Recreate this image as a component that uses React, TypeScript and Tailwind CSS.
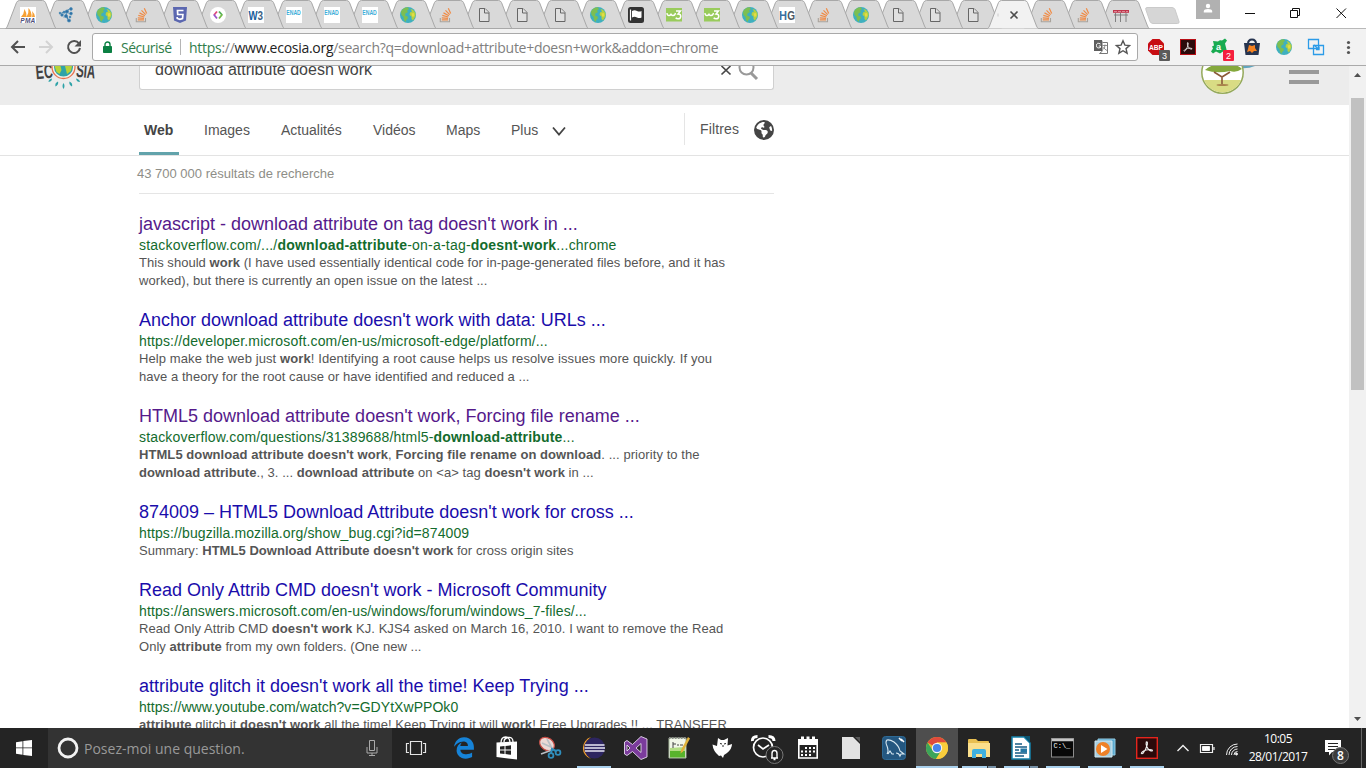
import React from "react";
import { FaEarthAmericas, FaEdgeLegacy } from "react-icons/fa6";

type IconProps = { s?: number };

const Earth = ({ s = 16 }: IconProps) => (
  <svg width={s} height={s} viewBox="0 0 16 16">
    <circle cx="8" cy="8" r="8" fill="#3fb0bf" />
    <path d="M1 4.500Q4 0 8 .4L9 2 7 3.500 8 5 5.500 6.500 5 8.500 7.500 9.500 8 11 6 13.500 5.500 15 4 13 3.500 10 1.500 8Z" fill="#7cbf52" />
    <path d="M10.500 2Q13 2 14.500 4.500L15.800 7 15 10 13 13.500 11.500 12 11.500 9.500 9.500 8 10 5.500 12 4.500Z" fill="#b5d043" />
    <path d="M11.500 6.500 14 6 14.500 9 12.500 10Z" fill="#e4dc43" />
  </svg>
);

const Stack = () => (
  <svg width="16" height="16" viewBox="0 0 16 16" fill="none">
    <path d="M2.300 11v3.700h9.200V11" stroke="#a9a39c" strokeWidth="1.100" />
    <path d="M3.800 12.800h6.200M3.800 10.800l6.200 .5M4.300 8.400l6 1.600M5.500 5.900l5.400 2.900M7.500 3.300l4.200 4.300M10.300 1.300l2.400 5.200" stroke="#f08b45" strokeWidth="1.200" />
  </svg>
);

const Doc = () => (
  <svg width="16" height="16" viewBox="0 0 16 16" fill="#e0e0e0" stroke="#666" strokeWidth="1">
    <path d="M3.500 1.500h5.500l4 4v9H3.500z" />
    <path d="M8.500 1.500v4.500h4.500" />
  </svg>
);

const Pma = () => (
  <svg width="16" height="16" viewBox="0 0 16 16">
    <rect width="16" height="16" fill="#fff" />
    <path d="M1 10Q4 7 4.500 2Q7 6 6.500 10ZM6.500 10Q9 6 8.500 1Q12 5 11.500 10ZM12 10Q13 7 12 4Q15 7 15 10Z" fill="#f6a034" />
    <text x="0.300" y="15.700" fontSize="6.500" fontWeight="bold" fontStyle="italic" fill="#51517c" fontFamily="Liberation Sans, sans-serif" textLength="15">PMA</text>
  </svg>
);

const Dots = () => (
  <svg width="16" height="16" viewBox="0 0 16 16" stroke="#4c8eb9" strokeWidth=".6" fill="#2d6fa4">
    <path d="M1 7l7-2 5-4M3 9l5-4M8 5l6 3M8 5v5l3 4M8 10H5" />
    <circle cx="13" cy="2" r="1.400" /><circle cx="9" cy="4.500" r="1.600" /><circle cx="2" cy="6" r=".9" />
    <circle cx="4" cy="8" r="1.300" /><circle cx="13" cy="6.500" r="1.400" /><circle cx="8" cy="9" r="1.600" />
    <circle cx="11" cy="13.500" r="1.600" /><circle cx="12" cy="10" r="1" /><circle cx="6" cy="5" r="1" />
  </svg>
);

const Shield5 = () => (
  <svg width="16" height="16" viewBox="0 0 16 16">
    <path d="M1 0h14l-1 13.500L8 16l-6-2.500z" fill="#5b67b0" />
    <path d="M11.500 3.500h-6l.2 4h5.200l-.4 4-2.600.9-2.600-.9-.1-1.500" fill="none" stroke="#fff" strokeWidth="1.700" />
  </svg>
);

const CodeRound = () => (
  <svg width="16" height="16" viewBox="0 0 16 16">
    <circle cx="8" cy="8" r="8" fill="#fff" />
    <path d="M7 4.500 4 8" stroke="#e0497a" strokeWidth="1.800" fill="none" />
    <path d="M3.800 7.500 7 11.500" stroke="#9a56c9" strokeWidth="1.800" fill="none" />
    <path d="M9 4.500 12.200 8" stroke="#4fae57" strokeWidth="1.800" fill="none" />
    <path d="M12.200 7.500 9 11.500" stroke="#72b944" strokeWidth="1.800" fill="none" />
  </svg>
);

const LetterIcon = ({ bg, parts, size, y }: { bg: string; parts: [string, string, number, number][]; size: number; y: number }) => (
  <svg className="overflow-visible" width="16" height="16" viewBox="0 0 16 16">
    <rect width="16" height="16" fill={bg} />
    {parts.map(([t, c, x, w]) => (
      <text key={t} x={x} y={y} fontSize={size} fontWeight="bold" fill={c} fontFamily="Liberation Sans, sans-serif" textLength={w} lengthAdjust="spacingAndGlyphs">{t}</text>
    ))}
  </svg>
);

const W3 = () => <LetterIcon bg="#fff" size={12} y={12.500} parts={[["W", "#17609c", 0.5, 9], ["3", "#3b6286", 9.500, 5.500]]} />;
const Enad = () => <LetterIcon bg="#fff" size={8} y={8} parts={[["ENAD", "#3cadd8", 0.3, 14.500]]} />;
const Hg = () => <LetterIcon bg="#fff" size={13} y={13} parts={[["H", "#396fa3", 0, 8], ["G", "#4c5663", 8.200, 7.800]]} />;

const Flag = () => (
  <svg width="16" height="16" viewBox="0 0 16 16">
    <rect width="16" height="16" rx="2.500" fill="#333" />
    <path d="M2.500 2.500v11" stroke="#fff" strokeWidth="1.200" />
    <path d="M4 4q2.500-1.500 5 0 2.500 1 4.500 0v6.500q-2 1-4.500 0-2.500-1.300-5 0z" fill="#fff" />
  </svg>
);

const Green3 = () => (
  <svg width="16" height="16" viewBox="0 0 16 16" fill="none" stroke="#fff">
    <rect width="16" height="13.500" y="1" fill="#99cb5c" stroke="none" />
    <path d="M1 6q0 2.500 2 2.500t2-2q0 2 2 2t2.500-2.500" strokeWidth="1.300" />
    <path d="M10 4h4.500l-2.500 3q3 0 2.700 2.600-.3 2.200-2.700 2.200-1.500 0-2.300-1.100" strokeWidth="1.500" />
  </svg>
);

const Bench = () => (
  <svg width="16" height="16" viewBox="0 0 16 16">
    <path d="M0 3h16v2.800H0z" fill="#c0354c" />
    <path d="M1 4.500h14" stroke="#e7aab4" strokeWidth=".7" strokeDasharray="3 1" />
    <path d="M2.500 6v9M7.500 6v9M13 6v9M1 8h14" stroke="#777" strokeWidth=".9" />
  </svg>
);

type Tab = { icon: () => React.ReactNode; w: number; active?: boolean };

const order = [Pma, Dots, Earth, Stack, Shield5, CodeRound, W3, Enad, Enad, Enad, Earth, Stack, Doc, Doc, Doc, Earth, Flag, Green3, Green3, Earth, Hg, Stack, Earth, Doc, Doc, Doc];
const tabs: Tab[] = [
  ...order.map((icon, i) => ({ icon: icon as () => React.ReactNode, w: i < 19 ? 38 : 37.1 })),
  { icon: () => null, w: 37.1, active: true },
  { icon: Stack, w: 37.1 },
  { icon: Stack, w: 37.1 },
  { icon: Bench, w: 37.1 },
];

const TabStrip = () => (
  <div className="flex h-[28px] bg-white">
    <div className="isolate flex pl-[6px]">
      {tabs.map((t, i) => (
        <div key={i} className="grid h-[29px] shrink-0" style={{ width: t.w, zIndex: t.active ? 99 : 50 - i }}>
          <svg className="overflow-visible [grid-area:1/1]" width="50" height="29" viewBox="0 0 50 29">
            <path
              d="M-.5 28.500Q.8 28 1.500 26L10.500 2.500Q11.500 .5 13.500 .5H36.500Q38.500 .5 39.500 2.500L48.500 26Q49.200 28 50.500 28.500Z"
              fill={t.active ? "#f2f2f2" : "#d9d9d9"}
            />
            <path
              d={"M-.5 28.500Q.8 28 1.500 26L10.500 2.500Q11.500 .5 13.500 .5H36.500Q38.500 .5 39.500 2.500L48.500 26Q49.200 28 50.500 28.500" + (t.active ? "" : "Z")}
              fill="none"
              stroke="#a8a8a8"
            />
          </svg>
          <div className="mt-[7px] ml-[14px] [grid-area:1/1]">
            {t.active ? (
              <svg className="overflow-visible" width="16" height="16" viewBox="0 0 16 16">
                <path d="M-4 6.500v3" stroke="#ccc" />
                <path d="M8.500 4.500l7 7M15.500 4.500l-7 7" stroke="#4d4d4d" strokeWidth="1.600" />
              </svg>
            ) : (
              <t.icon />
            )}
          </div>
        </div>
      ))}
    </div>
    <svg className="mt-[5px] ml-[9px]" width="35" height="20" viewBox="0 0 35 20">
      <path d="M2 2.500h25q2 0 3 2l4 12q.5 2-1.500 2H8q-2 0-3-2L.8 4.500Q.2 2.500 2 2.500z" fill="#d6d6d6" stroke="#cacaca" />
    </svg>
    <div className="ml-auto flex">
      <div className="flex h-[19px] w-[24px] justify-center bg-[#b1b1b1]">
        <svg width="10" height="16" viewBox="0 0 10 16" fill="#fff">
          <circle cx="5" cy="6" r="2.200" />
          <path d="M.8 12.500V11Q1 9 5 9t4.200 2v1.500z" />
        </svg>
      </div>
      <svg width="146" height="28" viewBox="0 0 146 28" fill="none" stroke="#111" strokeWidth="1">
        <path d="M25 13.500h10M70.500 10.500h7v7h-7zM72.500 10.500v-2h7v7h-2M116.500 8.500l9.500 9.500M126 8.500l-9.500 9.500" />
      </svg>
    </div>
  </div>
);

const AdobeMark = ({ s = 16, c = "#fff" }: { s?: number; c?: string }) => (
  <svg width={s} height={s} viewBox="0 0 22 22">
    <rect x=".7" y=".7" width="20.600" height="20.600" fill="#2b0a0b" stroke={c} strokeWidth="1.400" />
    <path d="M10.300 5q1.500-.6 1 2.500-1.300 5-4 8.500-1.500 1.300-2 .3.300-1.700 4.800-3.300 4.700-1 6.300.1.300 1.200-1.400.9-2.600-.7-4.300-4.500-1-3-.4-4.500z" fill="none" stroke="#eee" strokeWidth="1.100" />
  </svg>
);

const Toolbar = () => (
  <div className="flex h-[38px] items-start border-b border-[#aaa] bg-[#f2f2f2] shadow-[inset_0_1px_0_#b9b9b9]">
    <svg className="shrink-0" width="92" height="37" viewBox="0 0 92 37" fill="none" strokeWidth="2">
      <path d="M25 19H12M18 13l-6 6 6 6" stroke="#515151" />
      <path d="M39 19h13M46 13l6 6-6 6" stroke="#d3d3d3" />
      <path d="M79 15.500A6 6 0 1 0 80 20" stroke="#515151" />
      <path d="M81 12v6.500h-6.500z" fill="#515151" />
    </svg>
    <div className="mt-[5px] flex h-[28px] w-[1046px] items-center rounded-[3px] border border-[#a9a9a9] bg-white font-['Open_Sans',sans-serif] text-[14px]">
      <svg className="ml-[10px] shrink-0" width="9" height="13" viewBox="0 0 9 13">
        <path d="M2 6V3.500a2.500 2.500 0 0 1 5 0V6" fill="none" stroke="#0b8043" strokeWidth="1.400" />
        <rect y="5" width="9" height="7" rx=".8" fill="#0b8043" />
      </svg>
      <span className="ml-[9px] w-[59px] shrink-0 tracking-[-0.5px] whitespace-nowrap text-[#2f7d4b]">Sécurisé</span>
      <div className="h-[16px] w-px shrink-0 bg-[#b5b5b5]" />
      <span className="ml-[8px] tracking-[-0.28px] whitespace-nowrap text-[#808080]">
        <span className="text-[#2f7d4b]">https</span>://<span className="text-[#222]">www.ecosia.org</span>/search?q=download+attribute+doesn+work&amp;addon=chrome
      </span>
      <svg className="mr-[6px] ml-auto shrink-0" width="38" height="16" viewBox="0 0 38 16">
        <path d="M1 1h8l3 11H1z" fill="#5e5e5e" />
        <path d="M9.500 3.500h5v11H6.500l3-2.500" fill="#fff" stroke="#777" />
        <path d="M9.500 6.500h5M12 5.500q0 4-2 5M10.500 8q1 2.500 3.500 3.500" stroke="#777" fill="none" strokeWidth=".8" />
        <path d="M7.500 5Q3.500 3 3.500 6.500t4 2V7H5.700" stroke="#fff" fill="none" />
        <path d="M30 1.800l1.900 4.300 4.700.4-3.600 3.100 1.100 4.600-4.100-2.500-4.100 2.500 1.100-4.600-3.600-3.100 4.700-.4z" fill="none" stroke="#555" strokeWidth="1.400" />
      </svg>
    </div>
    <svg className="shrink-0" width="228" height="37" viewBox="0 0 228 37">
      <g fontFamily="Liberation Sans, sans-serif" fontWeight="bold">
        <path d="M14.500 11h7l4.500 4.500v7L21.500 27h-7L10 22.500v-7z" fill="#c70d12" />
        <text x="11" y="22" fontSize="8" fill="#fff" textLength="14" lengthAdjust="spacingAndGlyphs">ABP</text>
        <rect x="21" y="22" width="11" height="11" rx="1" fill="#5a5a5a" />
        <text x="24" y="31" fontSize="9" fill="#fff" fontWeight="normal">3</text>
        <path d="M75 13l5 0.500q2-2 4-1l3-2 2 2-2 3 1 4 1 4-4 0-3 2-4-2-3 2-2-2 2-3-1-2 2-1z" fill="#18ab50" />
        <text x="78" y="22" fontSize="9" fill="#fff">a</text>
        <rect x="85" y="22" width="11" height="11" rx="1" fill="#f5203e" />
        <text x="88" y="31" fontSize="9" fill="#fff" fontWeight="normal">2</text>
      </g>
      <path d="M110 16q0-4.500 4-4.500t4 4.500" fill="none" stroke="#26344f" strokeWidth="2" />
      <path d="M106 15h16l-1.500 12h-13z" fill="#26344f" />
      <path d="M111 17l3 1 3-1 0 3 2 3-3 0-2 2-2-2-3 1 1-3z" fill="#f58220" />
      <path d="M170.500 11.500h10v9h-10zM175.500 17.500h10v9h-10z" fill="none" stroke="#2b9be8" strokeWidth="1.300" />
      <path d="M176 17l5 4.500M181 18.500v3h-3" stroke="#2b9be8" strokeWidth="1.300" fill="none" />
      <g fill="#555"><circle cx="210.500" cy="14.500" r="1.600" /><circle cx="210.500" cy="19.500" r="1.600" /><circle cx="210.500" cy="24.500" r="1.600" /></g>
      <g transform="translate(42 11)">
        <AdobeMark s={16} c="#b80f16" />
      </g>
      <g transform="translate(138 11)"><Earth /></g>
    </svg>
  </div>
);

const SiteHeader = () => (
  <div className="flex h-[39px] bg-[#ececec]">
    <svg className="ml-[33px] shrink-0" width="66" height="26" viewBox="33 66 66 26">
      <g fontFamily="Liberation Sans, sans-serif" fontWeight="bold" fontSize="20" fill="#414141">
        <text x="36" y="78.500" textLength="17" lengthAdjust="spacingAndGlyphs" transform="rotate(-5 44 75)">EC</text>
        <text x="76" y="77.500" textLength="19" lengthAdjust="spacingAndGlyphs" transform="rotate(5 84 74)">SIA</text>
      </g>
      <circle cx="63.500" cy="67" r="11.500" fill="#f4f1e8" stroke="#e8724e" strokeWidth="1.300" />
      <circle cx="63.500" cy="67" r="9.500" fill="#2fa3a8" />
      <path d="M54.500 66h6l1 4-2 4-3-2zM65 66h7l-1 5-4 3-1-4z" fill="#b8d238" />
      <g fill="#2fa3a8">
        <path d="M52 78.500q0 3-3.500 3.500 0-3 3.500-3.500zM58 81.500q1 3-2.500 5-1-3.500 2.500-5zM63.500 83q2 3 0 6-2-3 0-6zM69.500 81.500q3.500 1.500 2.500 5-3.500-2-2.500-5zM76 78.500q3.500.5 4 3.500-3.500 0-4-3.500z" />
      </g>
    </svg>
    <div className="ml-[40px] flex h-[24px] w-[635px] shrink-0 rounded-b-[3px] border border-t-0 border-[#d0d0d0] bg-white">
      <span className="-mt-[8px] ml-[15px] text-[16px] leading-[24px] whitespace-nowrap text-[#444]">download attribute doesn work</span>
      <svg className="mr-[-1px] ml-auto shrink-0" width="56" height="16" viewBox="0 0 56 16" fill="none">
        <path d="M3.500 0l9 8.500M12.500 0l-9 8.500" stroke="#484848" strokeWidth="1.700" />
        <circle cx="28.500" cy="1.500" r="7" stroke="#999" strokeWidth="2" />
        <path d="M33 7l6 6" stroke="#999" strokeWidth="3" />
      </svg>
    </div>
    <svg className="ml-[424px] shrink-0" width="124" height="30" viewBox="1198 66 124 30">
      <path d="M1226 66h29q-7 3-16 2z" fill="#61a5bd" />
      <circle cx="1222.500" cy="72.500" r="20.700" fill="#fff" stroke="#94a95b" strokeWidth="1.500" />
      <path d="M1204 80h37a20 20 0 0 1-37 0z" fill="#d9dc84" />
      <path d="M1205 70q6-6 16-5 14-3 21 4-6 4-12 2-13 3-25-1z" fill="#84a83c" />
      <path d="M1214 72l8 5 8-5M1222 76v8" stroke="#8b5a3a" strokeWidth="1.600" fill="none" />
      <ellipse cx="1222.500" cy="85" rx="6" ry="1" fill="#a8824b" />
      <path d="M1289 70h30v4h-30zM1289 80h30v4h-30z" fill="#999" />
    </svg>
  </div>
);

const Nav = () => (
  <div className="flex h-[51px] border-b border-[#e3e3e3] pl-[139px] text-[14px] text-[#555]">
    <div className="h-[50px] w-[40px] border-b-3 border-[#62a3ab] pl-[5px] leading-[50px] font-bold text-[#444]">Web</div>
    <span className="ml-[25px] w-[77px] leading-[50px]">Images</span>
    <span className="w-[92px] leading-[50px]">Actualités</span>
    <span className="w-[73px] leading-[50px]">Vidéos</span>
    <span className="w-[65px] leading-[50px]">Maps</span>
    <span className="w-[41px] leading-[50px]">Plus</span>
    <svg className="mt-[21px]" width="14" height="11" viewBox="0 0 14 11" fill="none" stroke="#444" strokeWidth="1.800"><path d="M1 1.500l6 7L13 1.500" /></svg>
    <div className="mt-[8px] ml-[118px] flex h-[32px] w-[90px] border-l border-[#e5e5e5] pl-[15px]">
      <span className="w-[54px] leading-[32px] tracking-[0.15px]">Filtres</span>
      <FaEarthAmericas className="mt-[7px] shrink-0 text-[#454545]" size={20} />
    </div>
  </div>
);

type Result = { title: string; visited?: boolean; url: React.ReactNode; urlTracking: number; lines: [React.ReactNode, number][] };

const results: Result[] = [
  {
    title: "javascript - download attribute on tag doesn't work in ...",
    visited: true,
    url: <>stackoverflow.com/.../<b>download-attribute</b>-on-a-tag-<b>doesnt-work</b>...chrome</>,
    urlTracking: 0.21,
    lines: [
      [<>This should <b>work</b> (I have used essentially identical code for in-page-generated files before, and it has</>, 0.035],
      [<>worked), but there is currently an open issue on the latest ...</>, 0.06],
    ],
  },
  {
    title: "Anchor download attribute doesn't work with data: URLs ...",
    url: "https://developer.microsoft.com/en-us/microsoft-edge/platform/...",
    urlTracking: 0.15,
    lines: [
      [<>Help make the web just <b>work</b>! Identifying a root cause helps us resolve issues more quickly. If you</>, 0.1],
      [<>have a theory for the root cause or have identified and reduced a ...</>, 0.045],
    ],
  },
  {
    title: "HTML5 download attribute doesn't work, Forcing file rename ...",
    visited: true,
    url: <>stackoverflow.com/questions/31389688/html5-<b>download-attribute</b>...</>,
    urlTracking: 0.17,
    lines: [
      [<><b>HTML5 download attribute doesn't work</b>, <b>Forcing file rename on download</b>. ... priority to the</>, 0.07],
      [<><b>download attribute</b>., 3. ... <b>download attribute</b> on &lt;a&gt; tag <b>doesn't work</b> in ...</>, 0.065],
    ],
  },
  {
    title: "874009 – HTML5 Download Attribute doesn't work for cross ...",
    url: "https://bugzilla.mozilla.org/show_bug.cgi?id=874009",
    urlTracking: 0.12,
    lines: [[<>Summary: <b>HTML5 Download Attribute doesn't work</b> for cross origin sites</>, 0.04]],
  },
  {
    title: "Read Only Attrib CMD doesn't work - Microsoft Community",
    url: "https://answers.microsoft.com/en-us/windows/forum/windows_7-files/...",
    urlTracking: 0.12,
    lines: [
      [<>Read Only Attrib CMD <b>doesn't work</b> KJ. KJS4 asked on March 16, 2010. I want to remove the Read</>, 0.065],
      [<>Only <b>attribute</b> from my own folders. (One new ...</>, 0.03],
    ],
  },
  {
    title: "attribute glitch it doesn't work all the time! Keep Trying ...",
    url: "https://www.youtube.com/watch?v=GDYtXwPPOk0",
    urlTracking: 0.05,
    lines: [[<><b>attribute</b> glitch it <b>doesn't work</b> all the time! Keep Trying it will <b>work</b>! Free Upgrades !! ... TRANSFER</>, 0.07]],
  },
];

const Results = () => (
  <div className="ml-[139px] w-[635px] whitespace-nowrap">
    <div className="-ml-[2px] h-[37px] text-[13px] leading-[35px] text-[#8e8e87]">43 700 000 résultats de recherche</div>
    <div className="mb-[18px] h-px bg-[#e5e5e5]" />
    {results.map((r) => (
      <div key={r.title} className="mb-[18px]">
        <div className={r.visited ? "h-[24px] text-[18px] leading-[24px] text-[#551a8b]" : "h-[24px] text-[18px] leading-[24px] text-[#1a0dab]"}>{r.title}</div>
        <div className="h-[18px] text-[14px] leading-[18px] text-[#136b2d]" style={{ letterSpacing: r.urlTracking }}>{r.url}</div>
        {r.lines.map(([l, tracking], i) => (
          <div key={i} className="h-[18px] text-[13px] leading-[18px] text-[#555]" style={{ letterSpacing: tracking }}>{l}</div>
        ))}
      </div>
    ))}
  </div>
);

const Scrollbar = () => (
  <div className="flex w-[17px] shrink-0 flex-col items-center bg-[#f1f1f1]">
    <svg width="17" height="32" viewBox="0 0 17 32"><path d="M5 11l3.500-4 3.500 4z" fill="#505050" /></svg>
    <div className="h-[292px] w-[13px] bg-[#c1c1c1]" />
    <svg className="mt-auto" width="17" height="17" viewBox="0 0 17 17"><path d="M5 6l3.500 4L12 6z" fill="#505050" /></svg>
  </div>
);

const EdgeIcon = () => <FaEdgeLegacy size={22} color="#1683d8" />;
const StoreIcon = () => (
  <svg width="24" height="26" viewBox="0 0 24 26">
    <path d="M6 8Q6 2 10.500 2T15 8M9 7q0-4 4.500-4.500T18 7" fill="none" stroke="#fff" strokeWidth="1.300" />
    <path d="M1.500 7.500L22 6.500v18L1.500 22z" fill="#fff" />
    <path d="M5 11.500l4.500-.5v3.500H5zM10.500 10.900l5.500-.6v4.200h-5.500zM5 15.500h4.500V19L5 18.500zM10.500 15.500H16v4.300l-5.500-.7z" fill="#242424" />
  </svg>
);
const SnipIcon = () => (
  <svg width="24" height="24" viewBox="0 0 24 24">
    <ellipse cx="9" cy="8" rx="8" ry="6" transform="rotate(35 9 8)" fill="#ecd9d6" stroke="#c94b43" strokeWidth="1.200" />
    <path d="M4 7l11 5M9 3l6 11M3 18l11-4" stroke="#b9bfc5" strokeWidth="1.600" />
    <circle cx="13" cy="19.500" r="2.400" fill="none" stroke="#2f8ebc" strokeWidth="1.800" />
    <circle cx="20" cy="16.500" r="2.400" fill="none" stroke="#2f8ebc" strokeWidth="1.800" />
    <path d="M13 17l1-4 4 2" stroke="#2f8ebc" strokeWidth="2" fill="none" />
  </svg>
);
const EclipseIcon = () => (
  <svg width="24" height="24" viewBox="0 0 24 24">
    <path d="M10 1A11.500 11.500 0 0 0 10 23 13.500 13.500 0 0 1 10 1z" fill="#f4a02c" />
    <circle cx="13.500" cy="12" r="10.500" fill="#2d2560" />
    <path d="M4 9h19.500M3.500 12h20.500M4 15h19.500" stroke="#e9e7f3" strokeWidth="1.400" />
  </svg>
);
const VsIcon = () => (
  <svg width="24" height="24" viewBox="0 0 24 24" fillRule="evenodd">
    <path d="M17 .5l6 2.500v18L17 23.500 8.500 15.500 3 19.500.5 18V6L3 4.500l5.500 4zM17 7.500L12 12l5 4.500zM3 9v6l3-3z" fill="#7b3c9c" stroke="#e6dbee" strokeWidth=".9" />
  </svg>
);
const NotepadIcon = () => (
  <svg width="24" height="24" viewBox="0 0 24 24">
    <path d="M2 2h17v20H2z" fill="#f1f6e9" stroke="#a6b79b" />
    <path d="M3 15h15v6.500H3z" fill="#58b32c" /><path d="M3 12l15-1v4H3z" fill="#b2dd84" />
    <path d="M6 6v6M6 8h3M10 9h2M13 9h3" stroke="#444" /><path d="M21 1l2 1.500-7 13-2.500 2 .5-3.500z" fill="#e0b23c" />
    <path d="M2 2h17" stroke="#888" strokeWidth="2" strokeDasharray="1.500 1.500" />
  </svg>
);
const CatIcon = () => (
  <svg width="22" height="22" viewBox="0 0 22 22">
    <path d="M7 1l3 2h3l4-2-.5 7.500L21 7q0 5-5 9l-3 2-1 3-2-2.500-2 .5Q2 14 1.500 7.500L6 9z" fill="#fff" />
    <path d="M9 6.500l2 .5M15 6.500l-2 .5M11 9h2" stroke="#242424" />
  </svg>
);
const AlarmIcon = () => (
  <svg width="34" height="30" viewBox="0 0 34 30" fill="none" className="overflow-visible">
    <circle cx="15" cy="14.500" r="9.500" stroke="#fff" strokeWidth="1.700" />
    <path d="M4.500 8Q4 3.500 9.500 3.500M20.500 3.500q5.500 0 5.500 4.500" stroke="#fff" strokeWidth="3" />
    <path d="M10 12l5 4 6-4" stroke="#fff" strokeWidth="1.700" />
    <circle cx="26.500" cy="22" r="8.500" fill="#242424" stroke="#777" />
    <path d="M23 25h7M24 24.500v-4q0-3 2.500-3t2.500 3v4M25.500 26.500h2" stroke="#fff" strokeWidth="1.400" />
  </svg>
);
const CalendarIcon = () => (
  <svg width="22" height="24" viewBox="0 0 22 24">
    <path d="M1.800 4h18.400v18H1.800z" fill="none" stroke="#fff" strokeWidth="1.600" />
    <path d="M1 3h20v6H1zM4 .5h3v3H4zM9.500 .5h3v3h-3zM15 .5h3v3h-3z" fill="#fff" />
    <path d="M8 12h11M4 15.500h15M4 19h11" stroke="#fff" strokeWidth="2" strokeDasharray="2 2" />
  </svg>
);
const PageIcon = () => (
  <svg width="22" height="24" viewBox="0 0 22 24"><path d="M2 1h11l7 7v15H2z" fill="#e2e2e2" /><path d="M15 1h5v5z" fill="#595959" /></svg>
);
const MysqlIcon = () => (
  <svg width="24" height="24" viewBox="0 0 24 24">
    <rect x=".5" y=".5" width="23" height="23" rx="3" fill="#245780" stroke="#2e6a95" />
    <path d="M5 18q2-3 0-8-2-4 0-6 3-.5 7 2 5 4 6 9l4 3-3 0-1 2q-1-3-4-3M6 18l2-3 2 3 2 0" fill="none" stroke="#d8e8f0" strokeWidth="1.100" />
    <path d="M17 2l3 3M22 6l-3-3" stroke="#fff" strokeWidth="1.600" />
  </svg>
);
const ChromeIcon = () => (
  <svg width="22" height="22" viewBox="0 0 22 22">
    <circle cx="11" cy="11" r="11" fill="#e8b92e" />
    <path d="M11 11L1.500 5.500A11 11 0 0 1 20.500 5.500H11z" fill="#df4a3c" />
    <path d="M1.500 5.500A11 11 0 0 0 10 22l5.300-8.500L11 11 6.700 13.500z" fill="#3ba55b" />
    <path d="M20.500 5.500H11v5l4.500 3L10 22A11 11 0 0 0 20.500 5.500z" fill="#f9cd3c" />
    <circle cx="11" cy="11" r="5.200" fill="#f5f5f5" /><circle cx="11" cy="11" r="4.100" fill="#4784ea" />
  </svg>
);
const FolderIcon = () => (
  <svg width="24" height="22" viewBox="0 0 24 22">
    <path d="M1 3q0-1 1-1h7l2 2h10q1 0 1 1v13H1z" fill="#e9bf51" /><path d="M1 6h22v14H1z" fill="#fbdf8c" />
    <path d="M5 21v-7q0-2 2-2h10q2 0 2 2v7h-4v-4H9v4z" fill="#3fb0df" />
  </svg>
);
const WriterIcon = () => (
  <svg width="22" height="24" viewBox="0 0 22 24">
    <path d="M2 1h12l6 6v16H2z" fill="#fff" stroke="#1584ad" strokeWidth="1.500" /><path d="M14 0h6v7z" fill="#0b5470" />
    <path d="M5 8h7M5 11h12M5 14h4M5 17h12M5 20h9" stroke="#165c85" strokeWidth="1.400" /><path d="M10.500 12.500h6.500v4h-6.500z" fill="#2578a4" />
  </svg>
);
const CmdIcon = () => (
  <svg width="24" height="20" viewBox="0 0 24 20">
    <rect x=".5" y=".5" width="22" height="18.500" fill="#080808" stroke="#8d8d8d" /><path d="M1 2h21.500" stroke="#c6c6c6" strokeWidth="2.500" />
    <text x="2.500" y="10" fontSize="7" fill="#fff" fontFamily="Liberation Mono, monospace">C:\_</text>
  </svg>
);
const MediaIcon = () => (
  <svg width="24" height="22" viewBox="0 0 24 22">
    <path d="M5 2h17v16H5z" fill="#5aa9cf" stroke="#92cce5" /><path d="M2 4h17v16H2z" fill="#a7cfe0" stroke="#d2e7f0" />
    <circle cx="10" cy="12" r="7" fill="#ef8127" /><path d="M8 8l6.500 4L8 16z" fill="#fff" />
  </svg>
);
const AcrobatIcon = () => <AdobeMark s={22} c="#e5251d" />;

type App = { icon: () => React.ReactNode; open?: boolean; active?: boolean; stacked?: boolean };
const pinned: App[] = [
  { icon: EdgeIcon }, { icon: StoreIcon }, { icon: SnipIcon }, { icon: EclipseIcon, open: true }, { icon: VsIcon },
  { icon: NotepadIcon }, { icon: CatIcon }, { icon: AlarmIcon }, { icon: CalendarIcon }, { icon: PageIcon }, { icon: MysqlIcon },
];
const running: App[] = [
  { icon: ChromeIcon, open: true, active: true }, { icon: FolderIcon, open: true, stacked: true }, { icon: WriterIcon, open: true, stacked: true },
  { icon: CmdIcon, open: true }, { icon: MediaIcon, open: true }, { icon: AcrobatIcon, open: true },
];

const AppCell = ({ app, w }: { app: App; w: number }) => (
  <div className={app.active ? "flex h-[40px] shrink-0 flex-col items-center bg-[#4e4e4e]" : "flex h-[40px] shrink-0 flex-col items-center"} style={{ width: w }}>
    <div className="flex h-[38px] items-center justify-center pt-[1px] pr-[1px]"><app.icon /></div>
    {app.open && (
      <div className={app.active ? "flex h-[2px] w-full bg-[#a9d0ec]" : "flex h-[2px] w-[34px] bg-[#a9d0ec]"}>
        {app.stacked && <div className="ml-auto w-[9px] border-l border-[#333] bg-[#7690a6]" />}
      </div>
    )}
  </div>
);

const Taskbar = () => (
  <div className="flex h-[40px] bg-[#242424] font-['Open_Sans',sans-serif] text-white">
    <svg className="shrink-0" width="48" height="40" viewBox="0 0 48 40" fill="#fff">
      <path d="M16 14.200l6.500-1v6.300H16zM23.300 13.100L32 12v7.500h-8.700zM16 20.300h6.500v6.500l-6.500-1zM23.300 20.300H32V28l-8.700-1.100z" />
    </svg>
    <div className="flex w-[344px] shrink-0 items-center bg-[#333]">
      <svg className="ml-[8px]" width="24" height="24" viewBox="0 0 24 24"><circle cx="12" cy="12" r="9" fill="none" stroke="#f2f2f2" strokeWidth="2.800" /></svg>
      <span className="ml-[4px] text-[14px] whitespace-nowrap text-[#999]">Posez-moi une question.</span>
      <svg className="mr-[14px] ml-auto" width="12" height="18" viewBox="0 0 12 18" fill="none" stroke="#aaa">
        <path d="M3.500 1.500h5v10h-5zM1 8v6h10V8M6 14v3M3 16.500h6" />
      </svg>
    </div>
    <svg className="shrink-0" width="51" height="40" viewBox="392 728 51 40" fill="none" stroke="#e5e5e5" strokeWidth="1.200">
      <path d="M410.500 741.500h11v13h-11zM409 743.500h-2.500v9h2.500M423 743.500h2.500v9H423" />
    </svg>
    {pinned.map((a, i) => <AppCell key={i} app={a} w={43} />)}
    {running.map((a, i) => <AppCell key={i} app={a} w={42} />)}
    <svg className="shrink-0" width="72" height="40" viewBox="1168 728 72 40" fill="none" stroke="#f0f0f0">
      <path d="M1177.500 751l5.500-5.500 5.500 5.500" strokeWidth="1.400" />
      <path d="M1200.500 744.500h12v8h-12zM1214 747v3" strokeWidth="1.200" /><path d="M1202.500 746.500h7v4h-7z" fill="#fff" />
      <path d="M1226.500 755a11 11 0 0 1 11-11M1229 755a8.500 8.500 0 0 1 8.500-8.500M1231.500 755a6 6 0 0 1 6-6M1234 755a3.500 3.500 0 0 1 3.500-3.500" />
      <circle cx="1236.500" cy="754" r="1" fill="#fff" />
    </svg>
    <div className="w-[76px] shrink-0 pt-[2px] text-center text-[12px] leading-[18px] tracking-[-0.5px] whitespace-nowrap">
      <div>10:05</div>
      <div>28/01/2017</div>
    </div>
    <svg className="ml-auto shrink-0" width="46" height="40" viewBox="1320 728 46 40">
      <path d="M1325 740h16v12h-9l-3 3.500V752h-4z" fill="#fff" />
      <path d="M1328 743.500h10M1328 746.500h10M1328 749.500h7" stroke="#242424" />
      <circle cx="1340.500" cy="755.500" r="8" fill="#3c3c3c" stroke="#777" />
      <text x="1340.500" y="760" textAnchor="middle" fontSize="12" fontWeight="600" fill="#fff" fontFamily="Open Sans, sans-serif">8</text>
      <path d="M1361.500 728v40" stroke="#666" />
    </svg>
  </div>
);

export default function App() {
  return (
    <div className="flex h-[768px] w-[1366px] flex-col overflow-hidden bg-white font-['Liberation_Sans',Arial,sans-serif]">
      <TabStrip />
      <Toolbar />
      <div className="flex h-[662px] overflow-hidden">
        <div className="h-full w-[1349px] shrink-0 overflow-hidden">
          <SiteHeader />
          <Nav />
          <Results />
        </div>
        <Scrollbar />
      </div>
      <Taskbar />
    </div>
  );
}
